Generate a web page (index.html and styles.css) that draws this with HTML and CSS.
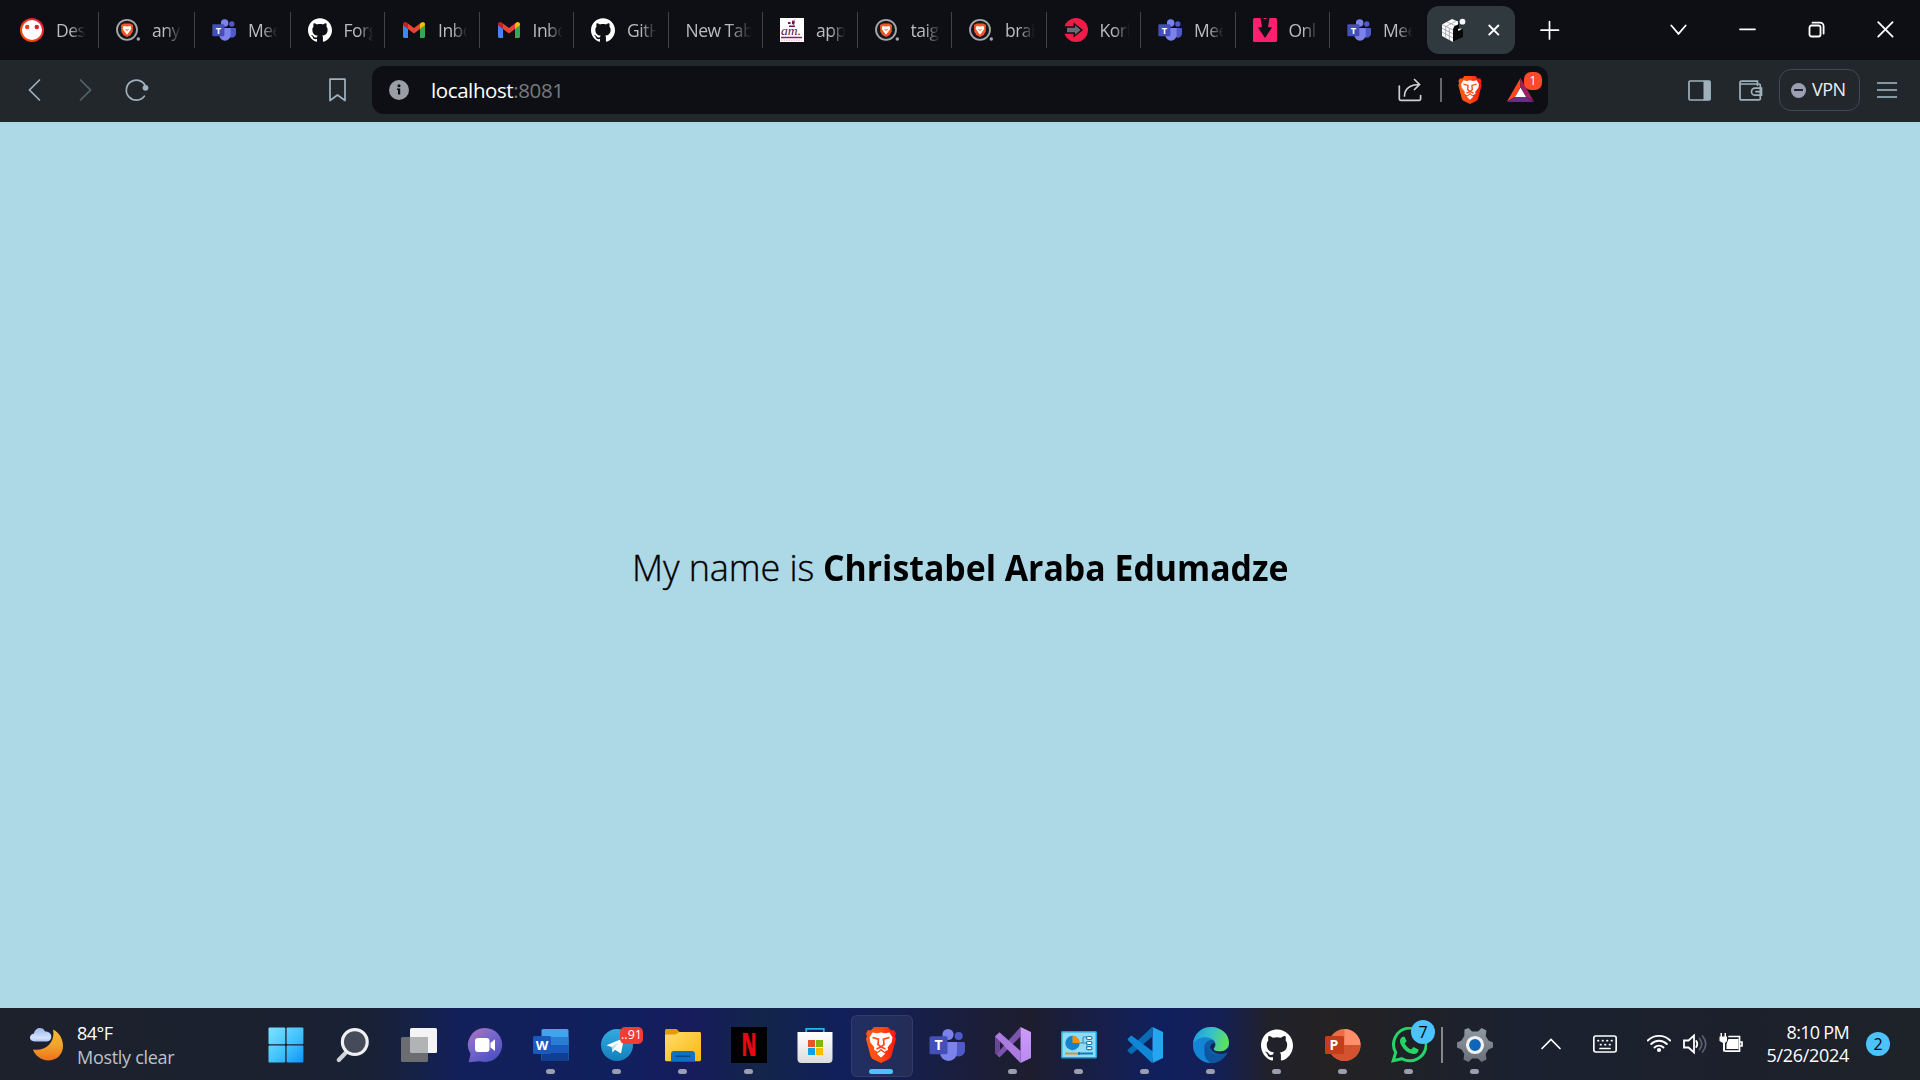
FILE: index.html
```
<!DOCTYPE html>
<html lang="en">
<head>
<meta charset="utf-8">
<title>localhost:8081</title>
<link rel="stylesheet" href="styles.css">
</head>
<body>
<svg class="defs" aria-hidden="true">
  <defs>
    <linearGradient id="g-lion" x1="0" y1="0" x2="1" y2="0"><stop offset="0" stop-color="#ff5a14"/><stop offset=".5" stop-color="#ff4a16"/><stop offset="1" stop-color="#f9160c"/></linearGradient>
    <linearGradient id="g-moon" x1="0" y1="0" x2="0" y2="1"><stop offset="0" stop-color="#f2bd35"/><stop offset=".5" stop-color="#f0a52c"/><stop offset="1" stop-color="#f0701c"/></linearGradient>
    <linearGradient id="g-cloud" x1="0" y1="0" x2="0" y2="1"><stop offset="0" stop-color="#9db9ec"/><stop offset=".75" stop-color="#d3e1fa"/><stop offset="1" stop-color="#a9c3f2"/></linearGradient>
    <linearGradient id="g-win" x1="0" y1="0" x2="36" y2="36" gradientUnits="userSpaceOnUse"><stop offset="0" stop-color="#7fe3ff"/><stop offset=".55" stop-color="#41c2fb"/><stop offset="1" stop-color="#0a93fb"/></linearGradient>
    <linearGradient id="g-chat" x1="0" y1="0" x2=".7" y2="1"><stop offset="0" stop-color="#b273b8"/><stop offset=".45" stop-color="#7a68cc"/><stop offset="1" stop-color="#4e50c2"/></linearGradient>
    <linearGradient id="g-tele" x1="0" y1="0" x2="0" y2="1"><stop offset="0" stop-color="#33abe0"/><stop offset="1" stop-color="#127fbd"/></linearGradient>
    <linearGradient id="g-folder" x1="0" y1="0" x2="1" y2="1"><stop offset="0" stop-color="#ffdb6b"/><stop offset="1" stop-color="#fbb90f"/></linearGradient>
    <linearGradient id="g-box" x1="0" y1="0" x2="0" y2="1"><stop offset="0" stop-color="#fff"/><stop offset="1" stop-color="#dcdcdc"/></linearGradient>
    <linearGradient id="g-vs" x1="0" y1="0" x2="0" y2="1"><stop offset="0" stop-color="#cf9bf8"/><stop offset="1" stop-color="#b98af2"/></linearGradient>
    <linearGradient id="g-edge" x1="0" y1=".2" x2="1" y2=".4"><stop offset="0" stop-color="#1b9de2"/><stop offset=".5" stop-color="#35c1c9"/><stop offset="1" stop-color="#63e05c"/></linearGradient>
    <linearGradient id="g-gear" x1="0" y1="0" x2="0" y2="1"><stop offset="0" stop-color="#9099a2"/><stop offset="1" stop-color="#697079"/></linearGradient>
    <linearGradient id="g-red" x1="0" y1="1" x2="1" y2="0"><stop offset="0" stop-color="#ff5a00"/><stop offset="1" stop-color="#e0103c"/></linearGradient>
  </defs>

  <symbol id="reddish" viewBox="0 0 24 24"><circle cx="12" cy="12" r="12" fill="url(#g-red)"/><circle cx="12" cy="12" r="10" fill="#fff"/><circle cx="7.2" cy="9" r="2.2" fill="#ef3a16"/><circle cx="16.8" cy="9" r="2.2" fill="#e31d2b"/></symbol>

  <symbol id="lion" viewBox="0 0 30 36">
    <path fill="url(#g-lion)" d="M8 0h14l3.200 3.600 2.800-.6 2 3.600-1 2.400 1 3-4.400 16.600c-.5 1.700-1.300 2.700-2.700 3.700L15 36l-7.900-3.700c-1.400-1-2.200-2-2.700-3.700L0 12l1-3L0 6.600l2-3.600 2.800.6z"/>
    <path fill="#fff" d="M6.500 5.500l4.500.8 4-.8 4 .8 4.500-.8 3 5-.8 4.700-4 5 .3 2.500-3.500 2-3.500-2.900-3.500 2.900-3.500-2 .3-2.500-4-5-.8-4.700zM15 23.700l4.200 3-4.200 3.800-4.200-3.800z"/>
    <path fill="none" stroke="#ff4817" stroke-width="1.700" d="M6.500 10.500l6 1.600-.5 5.400 3 2.300 3-2.300-.5-5.400 6-1.600M10.500 22l4.500-2 4.500 2"/>
  </symbol>
  <symbol id="bravesearch" viewBox="0 0 24 24"><circle cx="11" cy="11.800" r="10" fill="#17181c" stroke="#a5a8ad" stroke-width="1.800"/><path fill="#fb542b" d="M8 5.500h6l3 1.500-.3 6.500-2 3.500-3.700 2-3.700-2-2-3.500L5 7z"/><path fill="#fff" d="M7.500 8l3.500.6 3.500-.6.8 2.700-2.200 3.300-2.100 2.700-2.100-2.700-2.200-3.300z"/><path d="M9.500 11.500l1.500.8 1.500-.8" stroke="#fb542b" fill="none"/><circle cx="22.300" cy="21" r="1.700" fill="#a5a8ad"/></symbol>

  <symbol id="teams" viewBox="0 0 36 36">
    <circle cx="29.700" cy="9" r="4" fill="#5059c9"/><path fill="#5059c9" d="M24 15h10.500c.8 0 1.500.7 1.500 1.500v7a6.200 6.200 0 0 1-9.500 5z"/>
    <circle cx="19" cy="7.500" r="5.600" fill="#7b83eb"/><path fill="#7b83eb" d="M11 15h17v10.500a8.500 8.500 0 0 1-17 0z"/>
    <rect x=".5" y="9.300" width="18" height="18" rx="1.500" fill="#454fb8"/>
    <text x="9.500" y="23.300" text-anchor="middle" font-size="14" font-weight="700" fill="#fff">T</text>
  </symbol>

  <symbol id="github" viewBox="0 0 24 24"><path fill="#fff" d="M12 .297c-6.630 0-12 5.373-12 12 0 5.303 3.438 9.800 8.205 11.385.6.113.82-.258.82-.577 0-.285-.01-1.040-.015-2.040-3.338.724-4.042-1.610-4.042-1.610C4.422 18.070 3.633 17.700 3.633 17.700c-1.087-.744.084-.729.084-.729 1.205.084 1.838 1.236 1.838 1.236 1.070 1.835 2.809 1.305 3.495.998.108-.776.417-1.305.76-1.605-2.665-.3-5.466-1.332-5.466-5.930 0-1.310.465-2.380 1.235-3.220-.135-.303-.54-1.523.105-3.176 0 0 1.005-.322 3.300 1.230.96-.267 1.980-.399 3-.405 1.020.006 2.040.138 3 .405 2.280-1.552 3.285-1.230 3.285-1.230.645 1.653.24 2.873.12 3.176.765.84 1.230 1.910 1.230 3.220 0 4.610-2.805 5.625-5.475 5.920.42.36.81 1.096.81 2.220 0 1.606-.015 2.896-.015 3.286 0 .315.21.69.825.57C20.565 22.092 24 17.592 24 12.297c0-6.627-5.373-12-12-12"/></symbol>

  <symbol id="gmail" viewBox="0 0 24 24"><path fill="#4285f4" d="M1 7v11.500c0 .8.700 1.500 1.500 1.500H6v-9.500z"/><path fill="#34a853" d="M23 7v11.500c0 .8-.7 1.500-1.500 1.500H18v-9.500z"/><path fill="#ea4335" d="M6 5.500l6 4.600 6-4.600V11l-6 4.600L6 11z"/><path fill="#c5221f" d="M1 6.300C1 4 3.500 3.600 4.900 4.700L6 5.500V11L1 7.300z"/><path fill="#fbbc04" d="M23 6.300c0-2.300-2.500-2.700-3.900-1.600l-1.100.8V11l5-3.700z"/></symbol>

  <symbol id="am" viewBox="0 0 24 24"><path fill="#fff" d="M0 0h24v24H0z"/><path fill="#6d1450" d="M8 4h2.500v2H8zM12 2.500l3 1-1 3.500-2-1zM9 7.500h6V9H9z"/><path stroke="#dd3a7a" fill="none" d="M13 3.500l2-2"/><text class="script" x="1" y="16.500" font-size="12" textLength="20" lengthAdjust="spacingAndGlyphs" fill="#511344">am.</text><path stroke="#7c2561" stroke-width="1.500" d="M1 19.500h21"/><path stroke="#eaa8be" stroke-dasharray="1.500 1" d="M1 22.200h21"/></symbol>

  <symbol id="kor" viewBox="0 0 24 24"><circle cx="12" cy="12" r="12" fill="#ee1c46"/><path fill="#0e0f14" d="M-1 8.300h10.500V4.500L19 12l-9.500 7.500v-3.800H-1z"/><path fill="#686b73" d="M3 9.800h8V7.200l5.800 4.800-5.800 4.800v-2.600H3z"/></symbol>
  <symbol id="down" viewBox="0 0 24 24"><rect width="24" height="24" rx="1.500" fill="#ff1f70"/><path fill="#0f1014" d="M7.500 0h9L15 9l4 .5L12 20 5 9.500 9 9z"/><path fill="#ff1f70" d="M10.500 0h3v1h-3z"/></symbol>

  <symbol id="cube" viewBox="0 0 24 24"><path fill="#fff" d="M0 6.500L10 1l6 2.500v4l-5 3V24L0 18z"/><path fill="#080808" d="M11 13l5.500-4v4l4.500-2v8l-10 4.500z"/><path stroke="#8a8d90" stroke-width=".7" fill="none" d="M0 6.500l11 5.500M0 10.300l11 5.500M0 14l11 6M3.700 8.500v11M7.300 10.300V22M5 4l9 4M4 8.500l10-5.500"/><path fill="#080808" d="M12 8.500l5-2.500v3.500l-6 4z"/><path fill="#fff" d="M16 11l4-.5-3.500 2.500z"/><circle cx="20.500" cy="3.700" r="2.900" fill="#f8f8f8"/></symbol>

  <symbol id="back" viewBox="0 0 24 24"><path d="M16.500 2L6.500 12l10 10"/></symbol>
  <symbol id="reload" viewBox="0 0 24 24"><path d="M19.300 18.200A10 10 0 1 1 20.200 7.500"/><circle cx="20.500" cy="9.800" r="2.900" fill="currentColor" stroke="none"/></symbol>
  <symbol id="bookmark" viewBox="0 0 24 24"><path d="M4 1.200h15v21.300L11.500 17 4 22.500z" stroke-linejoin="round"/></symbol>
  <symbol id="share" viewBox="0 0 24 24"><path d="M1.300 8v13c0 .8.5 1.300 1.300 1.300h18.700c.8 0 1.300-.5 1.300-1.300v-3.500M6.500 18c0-7 5.500-11.500 15-11.500M16.500 1.500l5 5-5 5"/></symbol>
  <symbol id="bat" viewBox="0 0 27 24"><path fill="#ff4724" d="M13.500 0L0 23.500l8-4.500 5.500-10z"/><path fill="#9e1f63" d="M13.500 0L27 23.500 19 19 13.500 9z"/><path fill="#662d91" d="M0 24h27l-8-5H8z"/><path fill="#fff" d="M13.500 9.500L8 19h11z"/></symbol>
  <symbol id="panel" viewBox="0 0 24 24"><rect x="1" y="2" width="21" height="19" rx="1.200"/><path fill="currentColor" stroke="none" d="M15.500 1.800h7v19.400h-7z"/></symbol>
  <symbol id="wallet" viewBox="0 0 24 24"><path d="M1 3.500c0-.8.500-1.300 1.300-1.300h16.200v4M1.500 5h18.500c.8 0 1.300.5 1.300 1.300v13.500c0 .6-.5 1.100-1.300 1.100H2.300c-.8 0-1.300-.5-1.300-1.300V3.500M22.500 9.200H16a3.300 3.300 0 0 0 0 7h6.500zM17 12.700h3"/></symbol>

  <symbol id="plus" viewBox="0 0 24 24"><path d="M12.500 3.500v17.500M4 12.200h17.500"/></symbol>
  <symbol id="down-chev" viewBox="0 0 24 24"><path d="M5.300 7.500l7.200 8.300 7.200-8.300"/></symbol>
  <symbol id="min" viewBox="0 0 24 24"><path d="M5 11.300h15"/></symbol>
  <symbol id="restore" viewBox="0 0 24 24"><rect x="5.500" y="7.500" width="11" height="11" rx="2"/><path d="M8.500 4.700H16a3.600 3.600 0 0 1 3.600 3.600v7.200"/></symbol>
  <symbol id="close" viewBox="0 0 24 24"><path d="M5.200 4.200l14.400 14.400M19.600 4.200L5.200 18.600"/></symbol>

  <symbol id="weather" viewBox="0 0 36 36"><path fill="url(#g-moon)" d="M24 3.500C38 10 38 34 19.500 34.500 12 34.500 5.500 29 4 23.500 18 25.500 26.500 15 24 3.500z"/><path fill="url(#g-cloud)" d="M5.500 15.500C-.5 15.500-.5 8 5 7.500 6 1 14 .2 16 5.500c5 0 6.500 3 6.300 5.500-.3 3.200-2.300 4.500-4.800 4.500z"/></symbol>
  <symbol id="windows" viewBox="0 0 36 36"><g fill="url(#g-win)"><rect x=".5" y=".5" width="16.800" height="16.800" rx="1"/><rect x="18.600" y=".5" width="16.800" height="16.800" rx="1"/><rect x=".5" y="18.600" width="16.800" height="16.800" rx="1"/><rect x="18.600" y="18.600" width="16.800" height="16.800" rx="1"/></g></symbol>
  <symbol id="search" viewBox="0 0 36 36"><path d="M11 25.500L3.800 33" stroke="#cfd3d6" stroke-width="4.200" stroke-linecap="round"/><circle cx="19.800" cy="15" r="12.400" fill="#464b5a" stroke="#eef0f1" stroke-width="3.200"/></symbol>
  <symbol id="taskview" viewBox="0 0 36 36"><rect x="9" y="1" width="27" height="25" rx="1.500" fill="#f4f4f4"/><rect x="0" y="10" width="27" height="25" rx="1.500" fill="#6c6d70"/><path fill="#b2b3b4" d="M9 10h18v16H10.500A1.500 1.500 0 0 1 9 24.500z"/></symbol>
  <symbol id="chat" viewBox="0 0 36 36"><path fill="url(#g-chat)" d="M18 1a17 17 0 1 1-5 33.200L1.700 35.200 3.500 27A17 17 0 0 1 18 1z"/><rect x="8" y="11" width="14.500" height="14" rx="3" fill="#fff"/><path fill="#fff" d="M23.500 16l4.500-3.800V24l-4.500-3.600z"/></symbol>
  <symbol id="word" viewBox="0 0 36 36"><rect x="8.500" y="2" width="27" height="32" rx="1.500" fill="#41a5ee"/><path fill="#2b7cd3" d="M8.500 10h27v8h-27z"/><path fill="#185abd" d="M8.500 18h27v8h-27z"/><path fill="#103f91" d="M8.500 26h27v6.500c0 .8-.7 1.500-1.500 1.500H10c-.8 0-1.500-.7-1.500-1.500z"/><rect x="0" y="9" width="18" height="18" rx="1.500" fill="#1b5abc"/><text x="9" y="22.800" text-anchor="middle" font-size="13" font-weight="700" fill="#fff">W</text></symbol>
  <symbol id="telegram" viewBox="0 0 36 36"><circle cx="18" cy="18" r="16" fill="url(#g-tele)"/><path fill="#fff" d="M7.500 18.200L25 11l-3 15.500-6-3.800-2.500 2.800-.8-5.500z"/><path fill="#b9dbef" d="M12.700 20L20 15.200l-5 5.800-1.500 4.500z"/></symbol>
  <symbol id="folder" viewBox="0 0 36 36"><path fill="#df9c07" d="M0 3.500C0 2.600.6 2 1.500 2h9c1 0 1.500.3 2 .8L15 5.500V12H0z"/><path fill="url(#g-folder)" d="M0 9c0-.8.5-1.500 1.500-1.500h9L14.500 5H34.500c.9 0 1.500.6 1.500 1.500v26.200c0 .9-.6 1.500-1.500 1.500h-33c-.9 0-1.500-.6-1.500-1.500z"/><path fill="#0f70c4" d="M6 34.300V27c0-2 1.200-3 3-3h18c1.800 0 3 1 3 3v7.300z"/><path stroke="#074a8c" stroke-width="1.500" d="M10.500 29.300h15"/></symbol>
  <symbol id="netflix" viewBox="0 0 36 36"><path d="M0 0h36v36H0z"/><g transform="translate(18 29) scale(.58 1)"><text text-anchor="middle" font-size="31" font-weight="800" fill="#e50914">N</text></g></symbol>
  <symbol id="store" viewBox="0 0 36 36"><path fill="none" stroke="#24b4ef" stroke-width="1.800" d="M9.200 7.500V1.900h17.600v5.600"/><path fill="url(#g-box)" d="M.5 5h35v27c0 2.400-1.400 4-4 4h-27c-2.600 0-4-1.600-4-4z"/><path fill="#f25022" d="M11 13h7v7h-7z"/><path fill="#7fba00" d="M19 13h7v7h-7z"/><path fill="#00a4ef" d="M11 21h7v7h-7z"/><path fill="#ffb900" d="M19 21h7v7h-7z"/></symbol>
  <symbol id="vs" viewBox="0 0 36 36"><path fill="#7e55ae" d="M0 10v16l4.500 4.500L25.500 9.500V0L5 23V9z"/><path fill="#6a4795" d="M0 10l5 4v9.500L2 28l-2-2z"/><path fill="#ac7be0" d="M0 9.300L4.500 5.200 25.500 24v12z"/><path fill="url(#g-vs)" d="M25.500 0L36 5v26l-10.500 5V0z"/></symbol>
  <symbol id="cpanel" viewBox="0 0 36 36"><rect x=".7" y="4.700" width="34.600" height="26" rx="1" fill="#8edcf5" stroke="#1aa2dc" stroke-width="1.500"/><circle cx="11.500" cy="16" r="7.200" fill="#1683cf"/><path fill="#f5920c" d="M11.500 16V8.800a7.200 7.200 0 0 1 7.200 7.200z"/><path fill="none" stroke="#3b87af" stroke-width="1" d="M19 16h3v-6h4M22 16h4v6"/><g fill="#fff" stroke="#1c79b8" stroke-width="1.200"><rect x="25.500" y="9.500" width="5.500" height="3" rx="1.500"/><rect x="25.500" y="14.500" width="5.500" height="3" rx="1.500"/><rect x="25.500" y="19.700" width="5.500" height="3" rx="1.500"/></g><path stroke="#ee8b10" stroke-width="1.800" d="M4 26.500h14"/><path stroke="#1877b6" stroke-width="1.800" d="M18 26.500h14M18 25v3"/></symbol>
  <symbol id="vscode" viewBox="0 0 36 36"><path fill="#0a6bb5" d="M1.200 22.500L25 0v9.700L5.500 26.500c-.7.6-1.500.6-2.200 0L.8 24.300a1.200 1.200 0 0 1 .4-1.800z"/><path fill="#0f87d4" d="M1.200 13.500c-.7-.5-.7-1.400-.1-2L3.300 9.300c.7-.6 1.500-.6 2.200-.1L26.500 25l-1.500 11z"/><path fill="#26a4f0" d="M25.500 0L36 5v26l-10.500 5z"/></symbol>
  <symbol id="edge" viewBox="0 0 36 36"><circle cx="18" cy="18" r="18" fill="#0d5ca8"/><path fill="#1484d6" d="M0 17C3 8 16 7 22 13c-8-2-13 5-10 12 1.500 4.500 5 8.500 9 10.700A18 18 0 0 1 0 17z"/><path fill="url(#g-edge)" d="M0 17C1 6 9 0 18 0c10 0 18 7 18 15.500 0 5.500-4 9-9 9-4 0-6.500-1.500-6.500-2.500 0-.8 2-1.500 2-4.500C22.500 9.500 6 6.500 0 17z"/><path fill="#16224f" d="M36.500 23.500c-4 5-14 5-19-2-1.500-3 2-6.500 4.500-5 .6 2.500-1.500 4.500-1.500 5.500 0 1 2.500 2.500 6.500 2.500 3 0 6-1 8-4z"/><path fill="#0e559f" d="M14 19c-1 9 12 12 20.500 7A18 18 0 0 1 18 36C12 33 9 25 14 19z"/></symbol>
  <symbol id="ppt" viewBox="0 0 36 36"><circle cx="19.500" cy="18" r="16" fill="#ed6c47"/><path fill="#ff8f6b" d="M19.500 2a16 16 0 0 1 16 16h-16z"/><path fill="#d35230" d="M3.500 18h32a16 16 0 0 1-32 0z"/><rect x="0" y="9" width="19" height="18" rx="1.500" fill="#c43e1c"/><text x="9" y="23" text-anchor="middle" font-size="14" font-weight="700" fill="#fff">P</text></symbol>
  <symbol id="whatsapp" viewBox="0 0 36 36"><path fill="none" stroke="#25d366" stroke-width="3" d="M2.200 33.800L4.700 25.500A16.300 16.300 0 1 1 11 31.700z"/><path fill="#25d366" d="M12.500 9.500c-3.500 1-4.500 4.500-2.300 8.500 3 5.500 7.500 9 12.800 9 3 0 4.700-2.300 4.500-4.500l-5-2.500-2.300 2.500c-3-1-5.300-3.500-6.500-6l2-2.300-2-4.300z"/></symbol>
  <symbol id="gear" viewBox="0 0 36 36"><path fill="url(#g-gear)" d="M7.500 2.500l4-1.500 3.500 3.500h6L24.500 1l5 2.500-.8 5.500 2.800 4.500 4.500 2v5l-4.500 2L28.700 27l.8 5.500-5 2.500L21 31.500h-6L11.500 35l-5-2.500.8-5.500-2.800-4.500L0 20.500v-5l4.500-2L7.300 9z"/><circle cx="18" cy="18" r="7.500" fill="#0f66b8" stroke="#f0f1f3" stroke-width="3.200"/></symbol>

  <symbol id="up-chev" viewBox="0 0 24 24"><path d="M3 16.500l9-9 9 9"/></symbol>
  <symbol id="keyboard" viewBox="0 0 24 24"><rect x=".8" y="4" width="22.400" height="16" rx="2"/><path stroke-dasharray=".5 4" d="M5 8.700h15M7.500 12.700h10"/><path d="M7 16.500h10"/></symbol>
  <symbol id="wifi" viewBox="0 0 24 24"><path stroke-width="1.900" d="M.8 8.500a15.800 15.800 0 0 1 22.400 0M4.200 12a11 11 0 0 1 15.600 0M7.500 15.500a6.400 6.400 0 0 1 9 0"/><circle cx="12" cy="18" r="2.100" fill="currentColor" stroke="none"/></symbol>
  <symbol id="volume" viewBox="0 0 24 24"><path stroke-width="1.800" d="M1 8.500h4.500L11 3.500v17l-5.500-5H1zM13.300 9q2 3 0 6"/><path stroke="#5b606b" stroke-width="1.700" d="M16.500 6.500q4.500 5.500 0 11M19.500 4q6.500 8 0 16"/></symbol>
  <symbol id="battery" viewBox="0 0 24 24"><path fill="currentColor" stroke="none" d="M1.500 1H3v3.500h2.500V1H7v3.500h1V9L6 11v8.500H4V11L.5 9V4.500h1zM9.500 7h10v10h-12v-5z"/><path d="M10 4.500h10.500v14.700H6.500M21 10h2v4h-2"/></symbol>
</svg>

<header class="tabstrip">
  <div class="tab tab-wide"><svg class="fav"><use href="#reddish"/></svg><span>Des</span></div>
  <div class="tab tab-wide"><svg class="fav"><use href="#bravesearch"/></svg><span>anyo</span></div>
  <div class="tab tab-wide"><svg class="fav"><use href="#teams"/></svg><span>Mee</span></div>
  <div class="tab"><svg class="fav"><use href="#github"/></svg><span>Forg</span></div>
  <div class="tab"><svg class="fav"><use href="#gmail"/></svg><span>Inbo</span></div>
  <div class="tab"><svg class="fav"><use href="#gmail"/></svg><span>Inbo</span></div>
  <div class="tab"><svg class="fav"><use href="#github"/></svg><span>GitH</span></div>
  <div class="tab tab-blank"><span>New Tab</span></div>
  <div class="tab"><svg class="fav"><use href="#am"/></svg><span>app</span></div>
  <div class="tab"><svg class="fav"><use href="#bravesearch"/></svg><span>taig</span></div>
  <div class="tab"><svg class="fav"><use href="#bravesearch"/></svg><span>brai</span></div>
  <div class="tab"><svg class="fav"><use href="#kor"/></svg><span>Korl</span></div>
  <div class="tab"><svg class="fav"><use href="#teams"/></svg><span>Mee</span></div>
  <div class="tab"><svg class="fav"><use href="#down"/></svg><span>Onl</span></div>
  <div class="tab tab-last"><svg class="fav"><use href="#teams"/></svg><span>Mee</span></div>
  <div class="tab-active"><svg class="fav"><use href="#cube"/></svg><svg class="tab-close"><use href="#close"/></svg></div>
  <svg class="line new-tab"><use href="#plus"/></svg>
  <div class="window-buttons">
    <svg class="line"><use href="#down-chev"/></svg>
    <svg class="line"><use href="#min"/></svg>
    <svg class="line"><use href="#restore"/></svg>
    <svg class="line"><use href="#close"/></svg>
  </div>
</header>

<nav class="toolbar">
  <div class="nav-left">
    <div class="btn"><svg class="line"><use href="#back"/></svg></div>
    <div class="btn dim flip"><svg class="line"><use href="#back"/></svg></div>
    <div class="btn"><svg class="line"><use href="#reload"/></svg></div>
    <div class="btn bookmark"><svg class="line"><use href="#bookmark"/></svg></div>
  </div>
  <div class="omnibox">
    <svg class="info" viewBox="0 0 20 20"><circle cx="10" cy="10" r="10" fill="#9a9da3"/><circle cx="10" cy="5.800" r="1.500" fill="#0e0f14"/><path fill="#0e0f14" d="M8 8.500h3.200v6H9v-4.500H8z"/></svg>
    <span class="url"><b>localhost</b>:8081</span>
    <svg class="line share"><use href="#share"/></svg>
    <i class="divider"></i>
    <svg class="shield"><use href="#lion"/></svg>
    <div class="rewards"><svg><use href="#bat"/></svg><span class="rewards-badge">1</span></div>
  </div>
  <div class="nav-right">
    <div class="btn"><svg class="line"><use href="#panel"/></svg></div>
    <div class="btn"><svg class="line"><use href="#wallet"/></svg></div>
    <div class="vpn"><i class="vpn-dot"></i><span>VPN</span></div>
    <div class="menu"><i></i><i></i><i></i></div>
  </div>
</nav>

<main class="page"><p class="intro"><span class="light">My name is</span> <strong>Christabel Araba Edumadze</strong></p></main>

<footer class="taskbar">
  <div class="weather"><svg><use href="#weather"/></svg><div><p>84°F</p><p class="sky">Mostly clear</p></div></div>
  <div class="apps">
    <div class="app"><svg><use href="#windows"/></svg></div>
    <div class="app"><svg><use href="#search"/></svg></div>
    <div class="app"><svg><use href="#taskview"/></svg></div>
    <div class="app"><svg><use href="#chat"/></svg></div>
    <div class="app open"><svg><use href="#word"/></svg></div>
    <div class="app open"><svg><use href="#telegram"/></svg><span class="unread">..91</span></div>
    <div class="app open"><svg><use href="#folder"/></svg></div>
    <div class="app open"><svg><use href="#netflix"/></svg></div>
    <div class="app"><svg><use href="#store"/></svg></div>
    <div class="app open current"><svg><use href="#lion"/></svg></div>
    <div class="app"><svg><use href="#teams"/></svg></div>
    <div class="app open"><svg><use href="#vs"/></svg></div>
    <div class="app open"><svg><use href="#cpanel"/></svg></div>
    <div class="app open"><svg><use href="#vscode"/></svg></div>
    <div class="app open"><svg><use href="#edge"/></svg></div>
    <div class="app open github-app"><svg><use href="#github"/></svg></div>
    <div class="app open"><svg><use href="#ppt"/></svg></div>
    <div class="app open"><svg><use href="#whatsapp"/></svg><span class="count">7</span></div>
    <div class="app open pinned"><svg><use href="#gear"/></svg></div>
  </div>
  <div class="tray">
    <svg class="line chev"><use href="#up-chev"/></svg>
    <svg class="line kbd"><use href="#keyboard"/></svg>
    <div class="status">
      <svg class="line"><use href="#wifi"/></svg>
      <svg class="line"><use href="#volume"/></svg>
      <svg class="line"><use href="#battery"/></svg>
    </div>
    <div class="clock"><p class="time">8:10 PM</p><p class="date">5/26/2024</p></div>
    <span class="notices">2</span>
  </div>
</footer>
</body>
</html>
```
FILE: styles.css
```
* { box-sizing: border-box; }

body {
  margin: 0;
  height: 1080px;
  overflow: hidden;
  display: flex;
  flex-direction: column;
  font-family: "Open Sans", "Noto Sans", sans-serif;
  background: #add8e6;
}

p { margin: 0; }
svg { display: block; flex: none; }
.defs { position: absolute; width: 0; height: 0; }
.line { width: 24px; height: 24px; fill: none; stroke: currentColor; stroke-width: 1.7; stroke-linecap: round; }
.script { font-family: "Liberation Serif", serif; font-style: italic; }

/* Tab strip */
.tabstrip {
  height: 60px;
  padding-left: 3px;
  display: flex;
  align-items: center;
  background: #0e0f14;
  color: #fff;
}

.tab {
  width: 94.5px;
  height: 36px;
  flex: none;
  padding-left: 17px;
  display: flex;
  align-items: center;
  border-right: 1px solid #424346;
}
.tab-wide { width: 96px; }
.tab-wide:nth-child(3) { width: 95.5px; }
.tab-last { width: 96.5px; border: 0; }
.fav { width: 24px; height: 24px; }
.tab span {
  width: 31px;
  margin-left: 12px;
  overflow: hidden;
  white-space: nowrap;
  font-size: 17.5px;
  line-height: 28px;
  letter-spacing: -.5px;
  color: #bbbcbe;
  -webkit-mask-image: linear-gradient(90deg, #000 45%, transparent 95%);
  mask-image: linear-gradient(90deg, #000 45%, transparent 95%);
}
.tab-blank span {
  width: 66px;
  margin-left: 0;
  -webkit-mask-image: linear-gradient(90deg, #000 65%, transparent);
  mask-image: linear-gradient(90deg, #000 65%, transparent);
}

.tab-active {
  width: 88px;
  height: 48px;
  flex: none;
  padding: 0 13px 0 15px;
  display: flex;
  align-items: center;
  justify-content: space-between;
  border-radius: 12px;
  background: #30393e;
}
.tab-close { width: 17px; height: 17px; margin-top: 1px; stroke: #fff; stroke-width: 2.7; }
.new-tab { margin-left: 22px; }
.window-buttons {
  margin-left: auto;
  padding-right: 23px;
  display: flex;
  gap: 45px;
}
.window-buttons .line { stroke-width: 1.8; }

/* Address bar */
.toolbar {
  height: 62px;
  display: flex;
  align-items: center;
  background: #22272b;
  color: #9fb1bd;
}
.nav-left { width: 372px; padding: 0 9px; display: flex; margin-top: -2px; }
.btn { width: 51px; display: flex; justify-content: center; }
.dim { color: #56636a; }
.flip { transform: scaleX(-1); }
.bookmark { margin-left: auto; }

.omnibox {
  width: 1176px;
  height: 48px;
  margin-top: -2px;
  padding: 0 14px 0 17px;
  display: flex;
  align-items: center;
  border-radius: 12px;
  background: #0e0f14;
}
.info { width: 20px; height: 20px; }
.url {
  margin-left: 22px;
  font-size: 20.5px;
  font-stretch: 93%;
  letter-spacing: -.4px;
  color: #777b80;
}
.url b { font-weight: 400; color: #fff; }
.share { margin-left: auto; color: #d0d0d1; }
.divider { width: 2px; height: 24px; margin: 0 16px 0 18px; background: #65686c; }
.shield { width: 24px; height: 28px; }
.rewards { position: relative; margin-left: 25px; }
.rewards svg { width: 27px; height: 24px; }
.rewards-badge {
  position: absolute;
  left: 17px;
  top: -6px;
  width: 18px;
  height: 18px;
  border-radius: 7px;
  background: #fc4a2a;
  color: #fff;
  text-align: center;
  font-size: 12px;
  line-height: 18px;
}

.nav-right {
  flex: 1;
  padding-right: 23px;
  display: flex;
  align-items: center;
  justify-content: flex-end;
}
.vpn {
  width: 81px;
  height: 42px;
  margin: -2px 17px 0 3px;
  padding-left: 11px;
  display: flex;
  align-items: center;
  border: 1.5px solid #3b4b51;
  border-radius: 12px;
  color: #eceef3;
  font-size: 18px;
}
.vpn span { margin: -2px 0 0 6px; letter-spacing: -.5px; }
.vpn-dot {
  width: 15px;
  height: 15px;
  border-radius: 50%;
  background: linear-gradient(#22272b, #22272b) center / 9px 2px no-repeat #9d9db4;
}
.menu { width: 20px; display: flex; flex-direction: column; gap: 5px; margin-top: -2px; }
.menu i { height: 2px; background: #8398a4; }

/* Page content */
.page { flex: 1; display: flex; align-items: center; justify-content: center; }
.intro {
  padding-top: 5px;
  display: flex;
  gap: 12px;
  white-space: nowrap;
  font-size: 36px;
  line-height: 48px;
  color: #000;
}
.light { width: 179px; font-weight: 300; letter-spacing: -.1px; -webkit-text-stroke: .35px #000; }
.intro strong { width: 465px; font-weight: 700; transform: scaleX(.939); transform-origin: left; }

/* Taskbar */
.taskbar {
  height: 72px;
  display: flex;
  align-items: center;
  color: #fff;
  background: linear-gradient(90deg, #1d212c 0, #1b2130 300px, #182137 380px, #12205a 460px, #10205e 620px, #161b5c 690px, #13254a 760px, #11205a 840px, #151f4e 900px, #1b1e38 980px, #1d1d2e 1030px, #171f49 1100px, #10205e 1160px, #141f54 1220px, #21212a 1270px, #242223 1330px, #202127 1400px, #1b2130 1520px, #1c202b 1750px, #1e2229 100%);
}
.weather {
  width: 253px;
  padding-left: 29px;
  display: flex;
  align-items: center;
  gap: 12px;
  font-size: 18px;
  line-height: 24px;
}
.weather svg { width: 36px; height: 36px; }
.weather p { padding-top: 1px; margin-bottom: -1px; letter-spacing: -.5px; }
.weather .sky { color: #bfc1c5; letter-spacing: -.3px; }

.apps { display: flex; }
.app {
  position: relative;
  width: 66px;
  height: 72px;
  display: flex;
  align-items: center;
  justify-content: center;
}
.app svg { width: 36px; height: 36px; margin-top: 2px; }
.app:nth-child(n + 2) svg { margin-left: 2px; }
.app:nth-child(n + 3) svg { margin-left: 1px; }
.open::after {
  content: "";
  position: absolute;
  left: 29px;
  bottom: 6px;
  width: 9px;
  height: 5px;
  border-radius: 3px;
  background: #9b9eae;
}
.current::before {
  content: "";
  position: absolute;
  left: 3.500px;
  top: 7px;
  width: 60px;
  height: 60px;
  border: 1px solid #ffffff14;
  border-radius: 6px;
  background: #ffffff10;
}
.current svg { position: relative; }
.current::after { left: 22px; width: 24px; background: #4cc2ff; }
.github-app svg { width: 32px; height: 32px; }
.unread {
  position: absolute;
  left: 37px;
  top: 19px;
  width: 23px;
  height: 17px;
  border-radius: 5px;
  background: #f23c34;
  text-align: center;
  font-size: 12.5px;
  line-height: 16px;
}
.count {
  position: absolute;
  left: 36px;
  top: 12px;
  width: 24px;
  height: 24px;
  border-radius: 50%;
  background: #4cc2ff;
  color: #000;
  text-align: center;
  font-size: 16px;
  line-height: 24px;
}
.pinned::before {
  content: "";
  position: absolute;
  left: 0;
  top: 19px;
  width: 2px;
  height: 36px;
  background: #87888c;
}

.tray {
  flex: 1;
  padding-right: 30px;
  display: flex;
  align-items: center;
  justify-content: flex-end;
}
.chev { margin-right: 30px; }
.kbd { margin-right: 30px; }
.status { display: flex; gap: 12px; }
.clock {
  width: 106px;
  text-align: right;
  font-size: 18px;
  line-height: 23px;
  white-space: nowrap;
}
.time { letter-spacing: -.7px; }
.date { letter-spacing: -.3px; }
.notices {
  width: 24px;
  height: 24px;
  margin-left: 17px;
  border-radius: 50%;
  background: #4cc2ff;
  color: #000;
  text-align: center;
  font-size: 16px;
  line-height: 24px;
}
```
